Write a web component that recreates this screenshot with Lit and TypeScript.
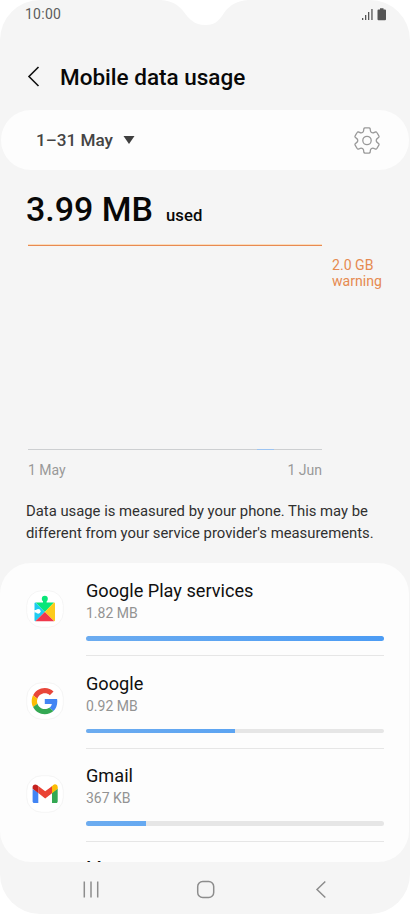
import { LitElement, html, css, svg } from "lit";
import { customElement } from "lit/decorators.js";

interface AppUsage {
  name: string;
  amount: string;
  share: number;
  icon: unknown;
}

const playIcon = svg`
  <path d="M9.500 12.500H28L18.800 22z" fill="#09e679"/>
  <circle cx="18.800" cy="8.800" r="3" fill="#09e679"/>
  <path d="M17 9h3.600v4H17z" fill="#09e679"/>
  <path d="M9.500 12.500 18.800 22 9.300 31.200q-.8-.2-.8-1V13.500q0-.8 1-1z" fill="#1fcbf0"/>
  <path d="M28 12.500 18.800 22l9.400 9.200q.8-.2.8-1V13.500q0-.8-1-1z" fill="#fccb1c"/>
  <path d="M18.800 22 28.200 31.200H9.300z" fill="#f0384b"/>
  <path d="M8.300 20h2.500v2.600H8.300z" fill="#fff"/>
  <circle cx="12.200" cy="21.300" r="2.400" fill="#fff"/>`;

const googleIcon = svg`
  <g transform="translate(5.700 6.100) scale(.545)">
    <path fill="#e8463a" d="M24 9.500c3.540 0 6.710 1.220 9.210 3.600l6.850-6.850C35.900 2.380 30.470 0 24 0 14.620 0 6.510 5.380 2.560 13.220l7.980 6.190C12.430 13.720 17.740 9.500 24 9.500z"/>
    <path fill="#4285f4" d="M46.980 24.550c0-1.570-.15-3.090-.38-4.550H24v9.020h12.940c-.58 2.960-2.260 5.480-4.780 7.180l7.730 6c4.510-4.180 7.090-10.360 7.090-17.650z"/>
    <path fill="#fbbc05" d="M10.530 28.590c-.48-1.450-.76-2.990-.76-4.590s.27-3.140.76-4.590l-7.980-6.190C.92 16.460 0 20.120 0 24c0 3.880.92 7.540 2.560 10.780z"/>
    <path fill="#34a853" d="M24 48c6.480 0 11.930-2.130 15.890-5.810l-7.730-6c-2.150 1.450-4.920 2.300-8.160 2.300-6.260 0-11.570-4.220-13.470-9.910l-7.980 6.190C6.510 42.620 14.620 48 24 48z"/>
  </g>`;

const gmailIcon = svg`
  <g transform="translate(-.6 -.6)">
  <path fill="#4285f4" d="M7.200 14.500v12.700c0 .9.700 1.500 1.500 1.500h4.200V18z"/>
  <path fill="#34a853" d="M26.600 18v10.700h4.200c.9 0 1.500-.7 1.500-1.500V14z"/>
  <path fill="#fbbc04" d="M26.600 11.800v7l5.700-4.400v-1.600c0-2.600-2.700-3.700-4.500-2.200z"/>
  <path fill="#ea4335" d="M12.900 18.600v-6.900l6.900 5.100 6.800-5v7l-6.800 5.200z"/>
  <path fill="#c5221f" d="M7.200 12.700v1.600l5.700 4.400v-7l-1.300-1c-1.800-1.300-4.400-.2-4.400 2z"/>
  </g>`;

const apps: AppUsage[] = [
  { name: "Google Play services", amount: "1.82 MB", share: 100, icon: playIcon },
  { name: "Google", amount: "0.92 MB", share: 50, icon: googleIcon },
  { name: "Gmail", amount: "367 KB", share: 20.2, icon: gmailIcon },
];

function gearPath(): string {
  const at = (r: number, deg: number) => {
    const a = (deg * Math.PI) / 180;
    return `${(14 + r * Math.sin(a)).toFixed(2)} ${(14 - r * Math.cos(a)).toFixed(2)}`;
  };
  let d = "";
  for (let k = 0; k < 360; k += 60) {
    d += `${k ? "L" : "M"}${at(9.3, k - 27)}Q${at(9.7, k - 20)} ${at(11, k - 17.5)}`;
    d += `L${at(12.2, k - 15)}Q${at(12.9, k - 13)} ${at(12.7, k - 9)}`;
    d += `L${at(12.7, k + 9)}Q${at(12.9, k + 13)} ${at(12.2, k + 15)}`;
    d += `L${at(11, k + 17.5)}Q${at(9.7, k + 20)} ${at(9.3, k + 27)}`;
  }
  return d + "Z";
}

@customElement("usage-row")
export class UsageRow extends LitElement {
  static properties = { app: { attribute: false } };
  declare app: AppUsage;

  static styles = css`
    :host { display: grid; grid-template-columns: 38px 298px; column-gap: 22px; height: 92.7px; box-sizing: border-box; padding: 17px 0 0 26px; }
    .icon { width: 38px; height: 38px; margin-top: 9.5px; overflow: visible; }
    .info { display: flex; flex-direction: column; border-bottom: 1px solid #e6e6e6; height: 76.3px; box-sizing: border-box; }
    .name { font-size: 18.15px; line-height: 22px; color: #101010; white-space: nowrap; }
    .amount { font-size: 14px; line-height: 18px; margin-top: 2px; color: #939393; }
    .track { height: 4.5px; margin-top: 14px; border-radius: 2.5px; background: #e6e6e6; overflow: hidden; }
    .fill { height: 100%; background: linear-gradient(90deg, #6cacf0, #4c9cf4); background-size: 298px 100%; }
  `;

  render() {
    return html`
      <svg class="icon" viewBox="0 0 38 38">
        <rect x=".7" y=".7" width="36.6" height="36.6" rx="15" fill="#fff" stroke="#f5f5f5"/>
        ${this.app.icon}
      </svg>
      <div class="info">
        <div class="name">${this.app.name}</div>
        <div class="amount">${this.app.amount}</div>
        <div class="track"><div class="fill" style="width:${this.app.share}%"></div></div>
      </div>`;
  }
}

@customElement("app-root")
export class AppRoot extends LitElement {
  static styles = css`
    :host { display: block; width: 410px; height: 914px; background: #fff; font-family: Roboto, "Liberation Sans", sans-serif; }
    .screen { position: relative; display: flex; flex-direction: column; width: 410px; height: 914px; border-radius: 40px; overflow: hidden; background: #f5f5f5; }
    .notch { position: absolute; top: 0; left: 155px; }
    .status { display: flex; justify-content: space-between; height: 28px; padding: 0 24px 0 25px; align-items: center; }
    .time { font-size: 14px; letter-spacing: .25px; color: #5c5c5c; }
    .header { display: flex; align-items: center; height: 82px; padding: 15px 0 0 26px; box-sizing: border-box; }
    .title { margin: 0 0 0 18px; font-size: 22.5px; font-weight: 500; line-height: 28px; color: #080808; }
    .period { display: flex; align-items: center; height: 60px; margin: 0 1px; padding: 0 28px 0 35px; border-radius: 30px; background: #fdfdfd; box-sizing: border-box; }
    .range { font-size: 17.15px; font-weight: 500; color: #444; }
    .caret { margin-left: 10px; }
    .gear { margin-left: auto; }
    .total { display: flex; align-items: baseline; height: 74px; padding: 18px 0 0 26px; box-sizing: border-box; font-weight: 500; color: #080808; }
    .value { font-size: 34px; line-height: 42px; }
    .used { margin-left: 13px; font-size: 16.7px; }
    .chart { display: flex; height: 206px; padding-left: 28px; }
    .plot { width: 294px; box-sizing: border-box; border-bottom: 1px solid #cdcfd1; position: relative; background: linear-gradient(#fbdcbc 1px, #e88a52 1px) top / 100% 2px no-repeat; }
    .trace { position: absolute; bottom: -1px; left: 229px; width: 17px; height: 1px; background: #9cc4f2; }
    .warning { margin: 12.5px 0 0 10px; font-size: 14.1px; line-height: 16.5px; color: #e68a50; }
    .axis { display: flex; justify-content: space-between; width: 294px; margin-left: 28px; padding-top: 11px; height: 20px; font-size: 14px; line-height: 18px; color: #999; }
    .note { margin: 19px 0 0 26px; height: 63px; font-size: 14.84px; line-height: 22px; color: #303030; white-space: nowrap; }
    .list { height: 299px; margin: 0 1px 0 0; border-radius: 31px; background: #fdfdfd; overflow: hidden; flex: none; }
    .next { padding: 16px 0 0 86px; font-size: 18.15px; line-height: 22px; color: #101010; }
    .nav { display: flex; height: 52px; }
    .nav svg { width: 410px; height: 52px; }
  `;

  render() {
    return html`
      <div class="screen">
        <svg class="notch" width="100" height="27" viewBox="0 0 100 27"><path fill="#fff" d="M6 0C17 1 23 4.500 28.500 11.500 34 19 39 25 50.500 25S65 19 70 11.500C76 4.500 82 1 93 0z"/></svg>
        <div class="status">
          <span class="time">10:00</span>
          <svg width="24" height="13" viewBox="0 0 24 13" fill="#555">
            <path d="M0 10h1.300v2H0zM3 7h1.300v5H3zM6 4h1.300v8H6zM9.300 1h1.300v11H9.300zM18 .3h3.500v1.200H23q1 0 1 1v8.800q0 1-1 1h-6.500q-1 0-1-1V2.500q0-1 1-1H18z"/>
          </svg>
        </div>
        <div class="header">
          <svg width="16" height="22" viewBox="0 0 16 22" fill="none" stroke="#111" stroke-width="1.600"><path d="M12.500 1 3 10.500l9.500 9.500"/></svg>
          <h1 class="title">Mobile data usage</h1>
        </div>
        <div class="period">
          <span class="range">1–31 May</span>
          <svg class="caret" width="12" height="10" viewBox="0 0 12 10"><path d="M.5 1h11L6 9z" fill="#3f3f3f"/></svg>
          <svg class="gear" width="28" height="28" viewBox="0 0 28 28" fill="none" stroke="#999" stroke-width="1.300" stroke-linejoin="round"><g transform="translate(0 .5)"><path d=${gearPath()}/><circle cx="14" cy="14" r="4.200"/></g></svg>
        </div>
        <div class="total"><span class="value">3.99 MB</span><span class="used">used</span></div>
        <div class="chart">
          <div class="plot"><div class="trace"></div></div>
          <div class="warning">2.0 GB<br>warning</div>
        </div>
        <div class="axis"><span>1 May</span><span>1 Jun</span></div>
        <div class="note">Data usage is measured by your phone. This may be<br>different from your service provider's measurements.</div>
        <div class="list">
          ${apps.map((a) => html`<usage-row .app=${a}></usage-row>`)}
          <div class="next">Messages</div>
        </div>
        <div class="nav">
          <svg viewBox="0 0 410 52" fill="none" stroke="#8d8d8d" stroke-width="1.500">
            <path d="M84.300 19.500v16M91 19.500v16M97.700 19.500v16"/>
            <rect x="197.700" y="19.500" width="16" height="16" rx="5"/>
            <path d="M325.300 19.500 317 27.500l8.300 8"/>
          </svg>
        </div>
      </div>`;
  }
}
